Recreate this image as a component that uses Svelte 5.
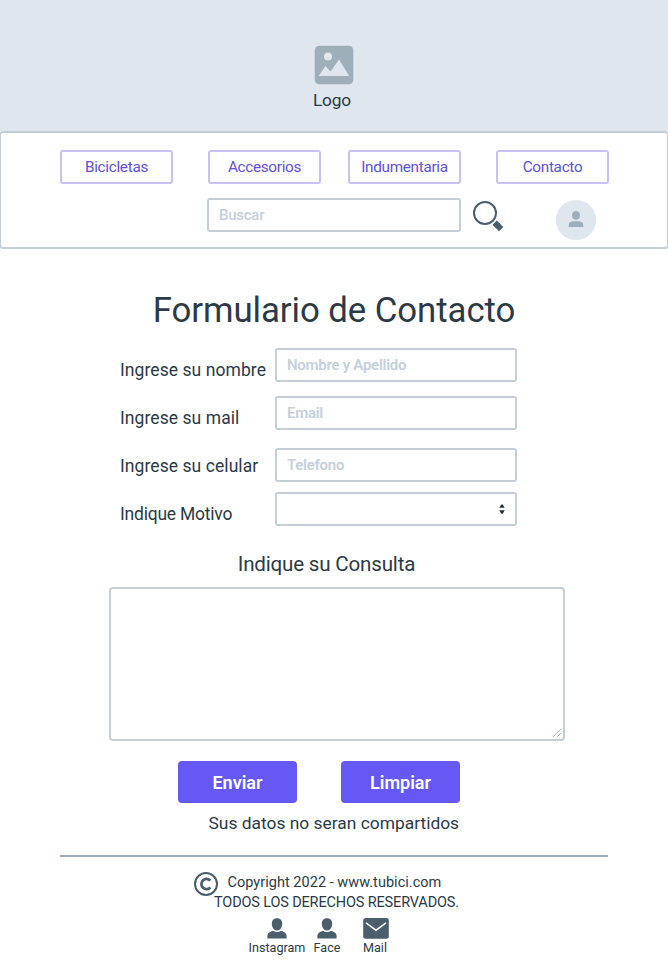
<script>
  const links = ['Bicicletas', 'Accesorios', 'Indumentaria', 'Contacto'];
  const fields = [
    { id: 'nombre', label: 'Ingrese su nombre', hint: 'Nombre y Apellido' },
    { id: 'mail', label: 'Ingrese su mail', hint: 'Email' },
    { id: 'celular', label: 'Ingrese su celular', hint: 'Telefono' }
  ];
</script>

{#snippet person()}
  <svg width="20" height="21" viewBox="0 0 20 21" fill="#4a5e6c">
    <path d="M10 .3c3.200 0 5.200 2.200 5.200 5.400 0 2.100-.9 4.500-2.300 5.700-1.700 1.400-4.100 1.400-5.800 0-1.400-1.200-2.300-3.600-2.300-5.700C4.800 2.500 6.800.3 10 .3z" />
    <path d="M.4 20.500v-2.700c0-2.300 2-4 5.600-5.100 2.300 1.700 5.700 1.700 8 0 3.600 1.100 5.600 2.800 5.600 5.100v2.700z" />
  </svg>
{/snippet}

<div class="page">
  <header>
    <svg width="40" height="40" viewBox="0 0 40 40">
      <rect x=".7" y=".7" width="38.600" height="38.600" rx="4.500" fill="#9eafba" />
      <circle cx="14" cy="11.500" r="4" fill="#dfe6ee" />
      <path d="M4.700 31 L11.300 21 L16.500 26.500 L25 14.500 L35.200 31 Z" fill="#dfe6ee" />
    </svg>
    <span>Logo</span>
  </header>

  <nav>
    <div class="links">
      {#each links as link}
        <button class="link">{link}</button>
      {/each}
    </div>
    <div class="tools">
      <input class="search" placeholder="Buscar" aria-label="Buscar" />
      <svg class="lens" width="32" height="32" viewBox="0 0 32 32">
        <circle cx="13" cy="13" r="11" fill="none" stroke="#4a5e6c" stroke-width="2" />
        <path d="M20.500 24.800 L24.800 20.500 L31.300 27 L27 31.300 Z" fill="#4a5e6c" />
      </svg>
      <div class="avatar">
        <svg width="16" height="18" viewBox="0 0 16 18" fill="#9eafba">
          <ellipse cx="8" cy="5.400" rx="4" ry="4.400" />
          <path d="M.7 17v-2.100c0-2.200 2.100-3.600 4.800-3.600h5c2.700 0 4.800 1.400 4.800 3.600V17z" />
        </svg>
      </div>
    </div>
  </nav>

  <main>
    <h1>Formulario de Contacto</h1>
    <div class="form">
      <div class="labels">
        {#each fields as f}
          <label for={f.id}>{f.label}</label>
        {/each}
        <label for="motivo">Indique Motivo</label>
      </div>
      <div class="inputs">
        {#each fields as f}
          <input id={f.id} class={f.id} placeholder={f.hint} />
        {/each}
        <button id="motivo" class="select" aria-label="Indique Motivo">
          <svg width="6" height="10" viewBox="0 0 6 10" fill="#22313c">
            <path d="M.3 3.800 L2.300.4h1.400L5.700 3.800z M.3 6.300h5.400L3.700 9.700H2.300z" />
          </svg>
        </button>
      </div>
    </div>
    <h2>Indique su Consulta</h2>
    <div class="area">
      <textarea aria-label="Indique su Consulta"></textarea>
      <svg class="grip" width="10" height="10" viewBox="0 0 10 10" stroke="#a4afb8" stroke-width=".9">
        <path d="M.8 9 L9 .8 M5 9 L9 5" />
      </svg>
    </div>
    <div class="actions">
      <button>Enviar</button>
      <button>Limpiar</button>
    </div>
    <p class="note">Sus datos no seran compartidos</p>
  </main>

  <footer>
    <div class="legal">
      <svg width="26" height="26" viewBox="0 0 26 26" fill="none" stroke="#4a5e6c">
        <circle cx="13" cy="13" r="11" stroke-width="2" />
        <path d="M17.300 9.700 A5 5.200 0 1 0 17.300 16.300" stroke-width="2.800" />
      </svg>
      <div class="lines">
        <p class="copy">Copyright 2022 - www.tubici.com</p>
        <p class="rights">TODOS LOS DERECHOS RESERVADOS.</p>
      </div>
    </div>
    <div class="social">
      <div class="item insta">{@render person()}<span>Instagram</span></div>
      <div class="item face">{@render person()}<span>Face</span></div>
      <div class="item mail-link">
        <svg width="26" height="21" viewBox="0 0 26 21">
          <rect x=".2" y="0" width="25.600" height="20.800" rx="2.500" fill="#4a5e6c" />
          <path d="M3 4.800 L13 12.200 L23 4.800" fill="none" stroke="#fff" stroke-width="1.500" />
        </svg>
        <span>Mail</span>
      </div>
    </div>
  </footer>
</div>

<style>
  :global(body) { margin: 0; background: #fff; }
  .page {
    width: 668px;
    height: 971px;
    overflow: hidden;
    font-family: Roboto, 'Liberation Sans', sans-serif;
    color: #2c3a45;
  }
  .page * { box-sizing: border-box; }
  svg { display: block; flex: none; }
  button, input, textarea { font-family: inherit; margin: 0; outline: none; }
  h1, h2, p { margin: 0; font-weight: 400; white-space: nowrap; }

  header {
    height: 131px;
    padding-top: 45px;
    background: #dfe6ee;
    display: flex;
    flex-direction: column;
    align-items: center;
  }
  header span { font-size: 17.3px; line-height: 20px; margin: 5px 4px 0 0; letter-spacing: -0.15px; }

  nav {
    height: 118px;
    margin: 0 -1px;
    border: 2px solid #c5cdd5;
    border-radius: 4px;
    padding: 17px 58px 0 59px;
    background: #fff;
  }
  .links { display: flex; }
  .link {
    width: 113px;
    height: 34px;
    padding: 0;
    border: 2px solid #c8c1f4;
    border-radius: 3px;
    background: #fff;
    color: #604fd8;
    font-size: 15.3px;
    font-weight: 400;
    letter-spacing: -0.3px;
  }
  .link:nth-child(2) { margin-left: 35px; }
  .link:nth-child(3) { margin-left: 27px; }
  .link:nth-child(4) { margin-left: 35px; }
  .tools { display: flex; padding: 14px 0 0 147px; }
  input, .select {
    display: block;
    width: 242px;
    height: 34px;
    border: 2px solid #c5cdd5;
    border-radius: 3px;
    background: #fff;
    padding: 0 10px;
    font-size: 15px;
    font-weight: 600;
    letter-spacing: -0.27px;
  }
  input::placeholder { color: #c5d0da; opacity: 1; }
  .search { width: 254px; letter-spacing: -0.25px; font-weight: 500; }
  .lens { margin: 2px 0 0 11px; }
  .avatar {
    width: 40px;
    height: 40px;
    border-radius: 50%;
    background: #dfe6ee;
    margin: 2px 0 0 52px;
    display: flex;
    justify-content: center;
    padding-top: 10px;
  }

  h1 {
    padding-top: 38px;
    font-size: 34.8px;
    line-height: 46px;
    letter-spacing: -0.07px;
    text-align: center;
  }
  .form { display: flex; padding: 15px 0 0 120px; }
  .labels { width: 155px; padding-top: 10px; }
  label {
    display: block;
    height: 48px;
    font-size: 17.5px;
    line-height: 24px;
    letter-spacing: 0.07px;
    white-space: nowrap;
  }
  label:last-child { letter-spacing: -0.22px; }
  .mail { margin-top: 14px; }
  .celular { margin-top: 18px; }
  .select {
    margin-top: 10px;
    display: flex;
    align-items: center;
    justify-content: flex-end;
  }
  h2 {
    font-size: 20.6px;
    line-height: 28px;
    letter-spacing: -0.2px;
    padding-right: 15px;
    text-align: center;
  }
  .area { position: relative; width: 456px; margin: 9px 0 0 109px; }
  textarea {
    display: block;
    width: 456px;
    height: 154px;
    border: 2px solid #c5cdd5;
    border-radius: 4px;
    resize: none;
    background: #fff;
  }
  .grip { position: absolute; right: 3px; bottom: 3px; }
  .actions { display: flex; gap: 44px; padding: 20px 0 0 178px; }
  .actions button {
    width: 119px;
    height: 42px;
    border: 0;
    border-radius: 4px;
    background: #6558f5;
    color: #fff;
    font-size: 18px;
    font-weight: 600;
  }
  .note { padding: 8px 0 0 208.500px; font-size: 17.4px; line-height: 24px; }

  footer { width: 548px; margin: 20px 0 0 60px; border-top: 2px solid #9eafba; }
  .legal { display: flex; padding: 14px 0 0 133px; }
  .lines { width: 250px; padding-top: 2px; font-size: 14.5px; line-height: 20px; }
  .legal svg { margin-right: -5px; }
  .copy { padding-left: 13.500px; letter-spacing: 0.03px; }
  .rights { letter-spacing: -0.15px; }
  .social { display: flex; padding: 5px 0 0 187px; }
  .item { display: flex; flex-direction: column; align-items: center; font-size: 12.6px; line-height: 18px; }
  .item span { white-space: nowrap; }
  .insta { width: 60px; }
  .face { width: 40px; }
  .mail-link { width: 30px; margin-left: 14px; }
  .mail-link span { margin-right: 2px; }
</style>
